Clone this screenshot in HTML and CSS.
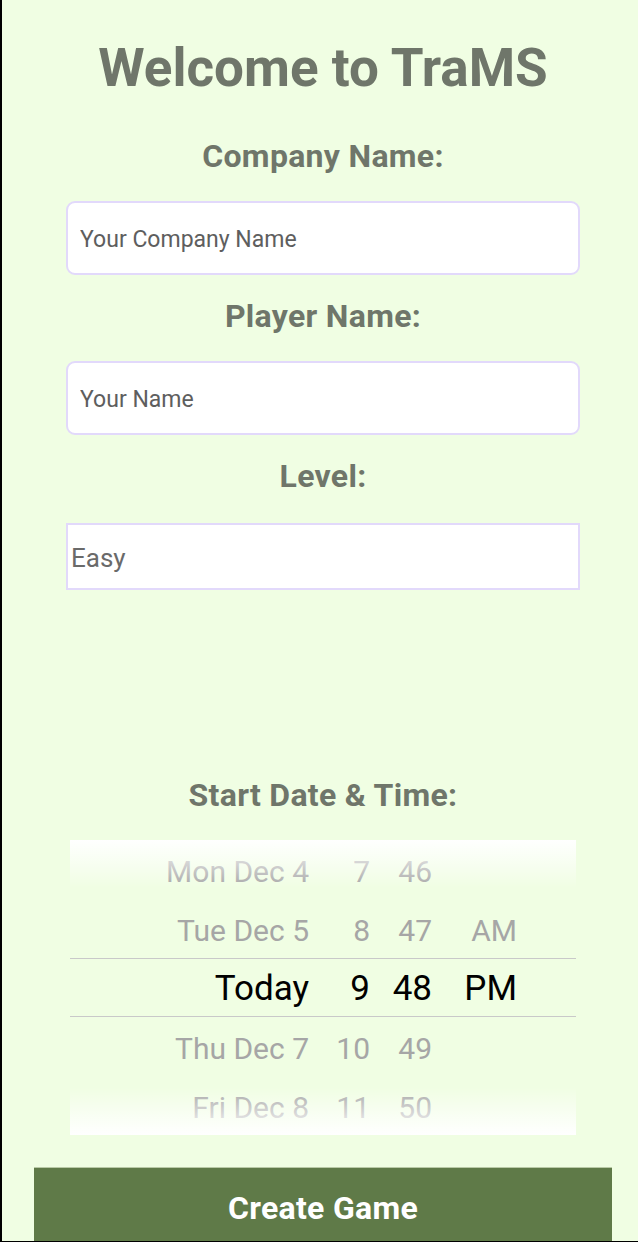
FILE: index.html
```html
<!DOCTYPE html>
<html>
<head>
<meta charset="utf-8">
<link rel="stylesheet" href="styles.css">
</head>
<body>
<div class="page">
  <h1 class="title">Welcome to TraMS</h1>
  <div class="label first">Company Name:</div>
  <input class="field" type="text" placeholder="Your Company Name">
  <div class="label">Player Name:</div>
  <input class="field" type="text" placeholder="Your Name">
  <div class="label level">Level:</div>
  <div class="select">Easy</div>
  <div class="label date-label">Start Date &amp; Time:</div>
  <div class="picker">
    <div class="row"><span>Mon Dec 4</span><span>7</span><span>46</span><span></span></div>
    <div class="row"><span>Tue Dec 5</span><span>8</span><span>47</span><span>AM</span></div>
    <div class="row selected"><span>Today</span><span>9</span><span>48</span><span>PM</span></div>
    <div class="row"><span>Thu Dec 7</span><span>10</span><span>49</span><span></span></div>
    <div class="row"><span>Fri Dec 8</span><span>11</span><span>50</span><span></span></div>
  </div>
  <button class="create">Create Game</button>
</div>
</body>
</html>
```
FILE: styles.css
```css
html, body {
  margin: 0;
  padding: 0;
}
body {
  width: 638px;
  height: 1242px;
  box-sizing: border-box;
  background: #f0fee3;
  border-left: 2px solid #000;
  border-bottom: 1px solid #000;
  overflow: hidden;
  font-family: Roboto, "Liberation Sans", sans-serif;
}
.page {
  width: 578px;
  margin-left: 32px;
  display: flex;
  flex-direction: column;
}
.title {
  margin: 38px 0 0;
  font-size: 53px;
  line-height: 60px;
  font-weight: 700;
  color: #6f766a;
  text-align: center;
}
.label {
  margin: 23px 0 27px;
  font-size: 32px;
  letter-spacing: 0.3px;
  line-height: 36px;
  font-weight: 700;
  color: #6f766a;
  text-align: center;
}
.label.first {
  margin-top: 40px;
}
.label.level {
  margin-bottom: 29px;
}
.field {
  margin: 0 32px;
  height: 74px;
  box-sizing: border-box;
  border: 2px solid #e2d9fb;
  border-radius: 9px;
  background: #fff;
  padding: 2px 12px 0;
  font-family: Roboto, "Liberation Sans", sans-serif;
  font-size: 23px;
  color: #333;
  outline: none;
}
.field::placeholder {
  color: #5e5e5e;
}
.select {
  margin: 0 32px;
  height: 67px;
  box-sizing: border-box;
  border: 2px solid #e2d9fb;
  background: #fff;
  padding: 2px 3px 0;
  display: flex;
  align-items: center;
  font-size: 26px;
  color: #6a6a6a;
}
.label.date-label {
  margin-top: 187px;
  margin-bottom: 27px;
}
.picker {
  position: relative;
  margin: 0 36px;
  width: 506px;
}
.picker::before,
.picker::after {
  content: "";
  position: absolute;
  left: 0;
  right: 0;
  height: 48px;
  pointer-events: none;
}
.picker::before {
  top: 0;
  background: linear-gradient(to bottom, rgba(255,255,255,1), rgba(255,255,255,0));
}
.picker::after {
  bottom: 0;
  background: linear-gradient(to top, rgba(255,255,255,1), rgba(255,255,255,0));
}
.row {
  display: grid;
  grid-template-columns: 239px 61px 62px 85px 1fr;
  height: 59px;
  box-sizing: border-box;
  padding-top: 4px;
  align-items: center;
  font-size: 30px;
  line-height: 55px;
  color: #a6a6a6;
  text-align: right;
}
.row.selected {
  font-size: 35px;
  color: #000;
  border-top: 1px solid #c9c9c9;
  border-bottom: 1px solid #c9c9c9;
  padding-top: 2px;
  line-height: 55px;
}
.create {
  margin-top: 33px;
  height: 80px;
  border: none;
  background: #5f7a48;
  box-shadow: 0 -1px 0 #b9caa6;
  color: #fff;
  font-family: Roboto, "Liberation Sans", sans-serif;
  font-size: 32px;
  letter-spacing: 0.3px;
  font-weight: 700;
  line-height: 36px;
  padding: 22px 0 20px;
  display: flex;
  justify-content: center;
  align-items: flex-start;
}
```
